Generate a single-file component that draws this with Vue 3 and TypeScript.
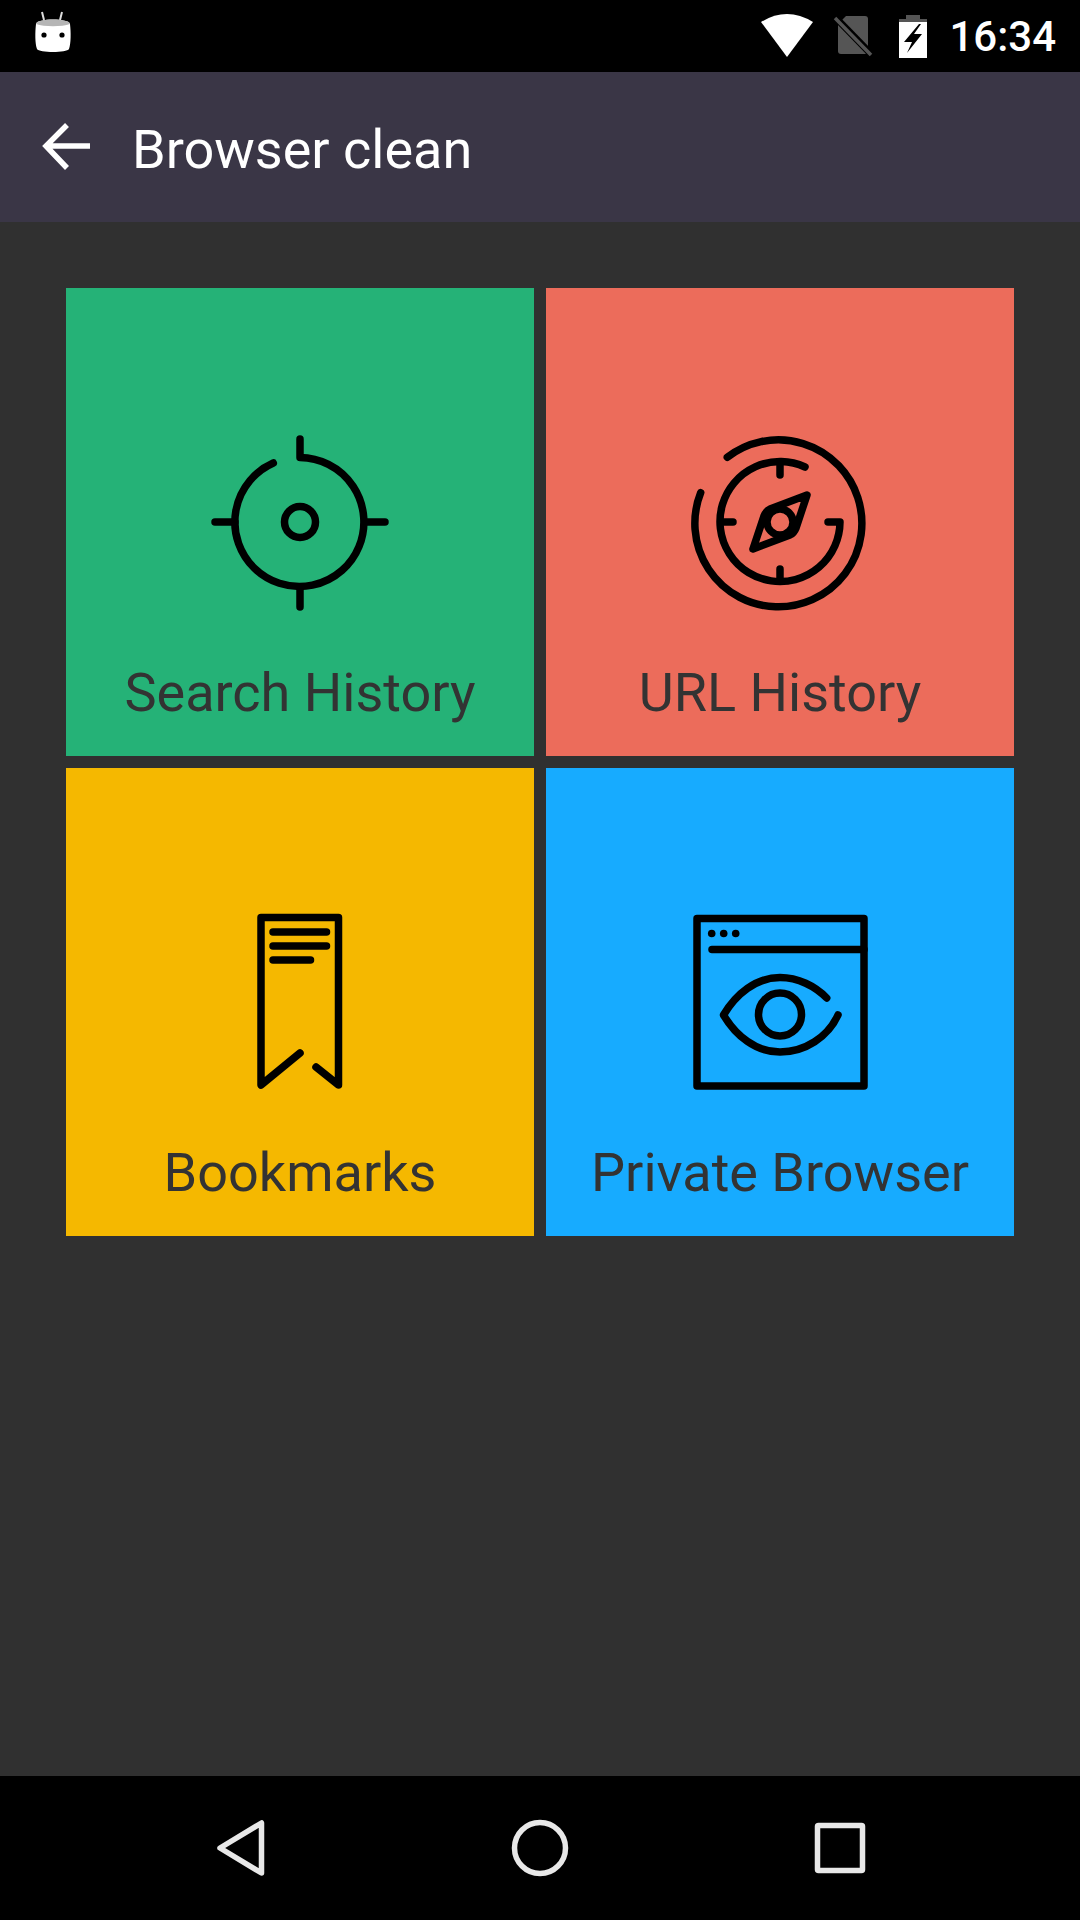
<template>
  <div class="screen">
    <div class="status-bar">
      <svg class="android" width="40" height="48" viewBox="0 0 40 48">
        <path d="M8 2 L10 10 M28 2 L26 10" stroke="#ddd" stroke-width="2" fill="none" />
        <path d="M2 14 C2 8 36 8 36 14 C37 22 37 34 35 39 C33 43 5 43 3 39 C1 34 1 22 2 14 Z" fill="#fff" />
        <path d="M2 14 C2 8 36 8 36 14 C28 17 10 17 2 14 Z" fill="#b5b5b5" />
        <circle cx="10" cy="25" r="2.6" fill="#000" />
        <circle cx="28" cy="25" r="2.6" fill="#000" />
      </svg>
      <svg class="wifi" width="54" height="44" viewBox="0 0 54 44">
        <path d="M1 8 Q27 -8 53 8 L27 43 Z" fill="#fff" />
      </svg>
      <svg class="sim" width="40" height="42" viewBox="0 0 40 42">
        <path d="M13 1 H32 Q35 1 35 4 V36 Q35 39 32 39 H8 Q5 39 5 36 V9 Z" fill="#555" />
        <path d="M2 2 L39 40" stroke="#000" stroke-width="7" />
        <path d="M2 3 L38 40" stroke="#555" stroke-width="3.5" />
      </svg>
      <svg class="battery" width="28" height="43" viewBox="0 0 28 43">
        <path d="M0 4 H28 V43 H0 Z" fill="#fff" />
        <path d="M7 0 H21 V4 H28 V7 H0 V4 H7 Z" fill="#555" />
        <path d="M20 9 L5 27 H13 L8 38 L23 19 H15 L22 9 Z" fill="#000" />
      </svg>
      <span class="time">16:34</span>
    </div>

    <div class="toolbar">
      <svg class="back" width="50" height="48" viewBox="0 0 50 48">
        <path d="M48 23 H4 M25 2 L4 23 L25 45" stroke="#fff" stroke-width="5.5" fill="none" />
      </svg>
      <span class="title">Browser clean</span>
    </div>

    <div class="content">
      <div v-for="tile in tiles" :key="tile.label" class="tile" :class="tile.cls">
        <svg class="tile-icon" width="180" height="180" viewBox="0 0 180 180">
          <g v-if="tile.icon === 'search'">
            <path d="M90 7 V25.5 A64.5 64.5 0 1 1 63.3 31" />
            <path d="M5 90 H25 M155 90 H175 M90 155 V175" />
            <circle cx="90" cy="90" r="15.5" />
          </g>
          <g v-else-if="tile.icon === 'url'">
            <path d="M37.3 25.3 A83.5 83.5 0 1 1 10.7 60.7" />
            <path d="M138 90 H150 A60 60 0 1 1 115 35" />
            <path d="M90 31 V43 M31 90 H43 M90 137 V149" />
            <path d="M117 63 L80 77 Q76 79 74 84 L63 117 L100 103 Q104 101 106 96 Z" />
            <circle cx="90" cy="90" r="13" />
          </g>
          <g v-else-if="tile.icon === 'bookmark'">
            <path d="M90 141 L51 173 V5.5 H128.5 V173 L106 155" />
            <path d="M63 20 H116.5 M63 34 H116.5 M63 48 H100.5" />
          </g>
          <g v-else>
            <rect x="7" y="6.5" width="167" height="167.5" />
            <path d="M22 37.5 H174" />
            <circle class="dot" cx="21.7" cy="21.5" r="3.8" />
            <circle class="dot" cx="33.7" cy="21.5" r="3.8" />
            <circle class="dot" cx="45.7" cy="21.5" r="3.8" />
            <path d="M136.7 86 C125 74 108 65.5 90 65.5 C66 65.5 46 82 33.5 103 C46 124 66 140 90 140 C115 140 138 125 148 103" />
            <circle cx="90" cy="102.5" r="21.5" />
          </g>
        </svg>
        <span class="label">{{ tile.label }}</span>
      </div>
    </div>

    <div class="nav-bar">
      <div class="nav-item">
        <svg width="72" height="72" viewBox="0 0 72 72">
          <path d="M57.5 11 V61 L16 36 Z" />
        </svg>
      </div>
      <div class="nav-item">
        <svg width="72" height="72" viewBox="0 0 72 72">
          <circle cx="36" cy="36" r="25.5" />
        </svg>
      </div>
      <div class="nav-item">
        <svg width="72" height="72" viewBox="0 0 72 72">
          <rect x="13.5" y="13.5" width="45" height="45" rx="1" />
        </svg>
      </div>
    </div>
  </div>
</template>

<script setup lang="ts">
interface Tile {
  label: string;
  icon: "search" | "url" | "bookmark" | "private";
  cls: string;
}

const tiles: Tile[] = [
  { label: "Search History", icon: "search", cls: "green" },
  { label: "URL History", icon: "url", cls: "red" },
  { label: "Bookmarks", icon: "bookmark", cls: "yellow" },
  { label: "Private Browser", icon: "private", cls: "blue" },
];
</script>

<style>
html,
body {
  margin: 0;
  background: #303030;
}
</style>

<style scoped>
.screen {
  display: flex;
  flex-direction: column;
  width: 1080px;
  height: 1920px;
  background: #303030;
  font-family: Roboto, "Liberation Sans", sans-serif;
  overflow: hidden;
}

.status-bar {
  display: flex;
  align-items: center;
  height: 72px;
  background: #000;
  flex: none;
}

.android {
  margin-left: 34px;
  margin-top: -5px;
}

.wifi {
  margin-left: auto;
  margin-top: 0;
}

.sim {
  margin-left: 19px;
  margin-top: 0;
}

.battery {
  margin-left: 26px;
}

.time {
  margin-left: 22px;
  margin-right: 24px;
  color: #fff;
  font-size: 42px;
  font-weight: 500;
}

.toolbar {
  display: flex;
  align-items: center;
  height: 150px;
  background: #3a3646;
  flex: none;
}

.back {
  margin-left: 42px;
}

.title {
  margin-left: 40px;
  margin-top: 4px;
  color: #fff;
  font-size: 54px;
}

.content {
  flex: 1;
  display: grid;
  grid-template-columns: 468px 468px;
  grid-auto-rows: 468px;
  gap: 12px;
  padding: 66px;
}

.tile {
  display: flex;
  flex-direction: column;
  align-items: center;
  padding-top: 144px;
  box-sizing: border-box;
}

.green {
  background: #25b277;
}

.red {
  background: #ec6c5b;
}

.yellow {
  background: #f5b800;
}

.blue {
  background: #17abff;
}

.tile-icon {
  fill: none;
  stroke: #000;
  stroke-width: 7.5;
  stroke-linecap: round;
  stroke-linejoin: round;
}

.tile-icon .dot {
  fill: #000;
  stroke: none;
}

.label {
  margin-top: 49px;
  color: #333333;
  font-size: 54px;
  line-height: 64px;
}

.nav-bar {
  display: grid;
  grid-template-columns: repeat(3, 300px);
  align-items: center;
  height: 144px;
  padding: 0 90px;
  background: #000;
  flex: none;
}

.nav-item {
  display: flex;
  justify-content: center;
}

.nav-item svg {
  fill: none;
  stroke: #e8e8e8;
  stroke-width: 5.5;
  stroke-linejoin: round;
}
</style>
